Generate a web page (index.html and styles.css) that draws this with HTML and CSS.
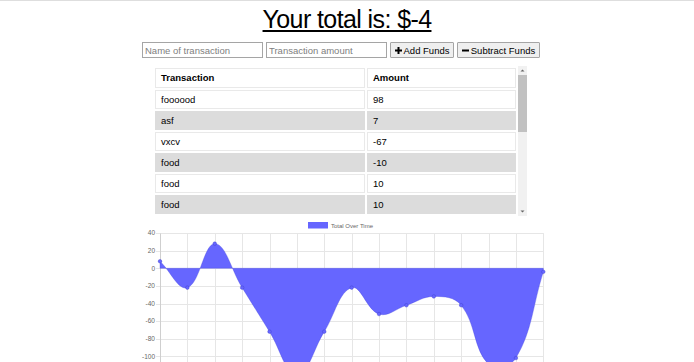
FILE: index.html
```html
<!DOCTYPE html>
<html lang="en">
<head>
<meta charset="utf-8">
<title>Budget Tracker</title>
<link rel="stylesheet" href="styles.css">
</head>
<body>
<div class="topline"></div>
<h1 class="total">Your total is: $-4</h1>
<div class="form-row">
  <input class="field" type="text" placeholder="Name of transaction">
  <input class="field" type="number" placeholder="Transaction amount">
  <button class="btn btn-add"><svg class="ico" viewBox="0 0 7 7" width="7" height="7"><rect x="2.5" y="0" width="2" height="7"/><rect x="0" y="2.5" width="7" height="2"/></svg>Add Funds</button>
  <button class="btn btn-sub"><svg class="ico" viewBox="0 0 7 7" width="7" height="7"><rect x="0" y="2.5" width="7" height="2"/></svg>Subtract Funds</button>
</div>
<div class="table-wrap">
  <div class="table-view">
    <table class="tx">
      <thead><tr><th class="c-name">Transaction</th><th>Amount</th></tr></thead>
      <tbody>
        <tr><td>foooood</td><td>98</td></tr>
        <tr><td>asf</td><td>7</td></tr>
        <tr><td>vxcv</td><td>-67</td></tr>
        <tr><td>food</td><td>-10</td></tr>
        <tr><td>food</td><td>10</td></tr>
        <tr><td>food</td><td>10</td></tr>
      </tbody>
    </table>
  </div>
  <div class="scrollbar" aria-hidden="true">
    <div class="sb-btn"><svg viewBox="0 0 9 9" width="9" height="9"><path d="M2.5 5.5 L4.5 3.5 L6.5 5.5Z"/></svg></div>
    <div class="sb-thumb"></div>
    <div class="sb-rest"></div>
    <div class="sb-btn"><svg viewBox="0 0 9 9" width="9" height="9"><path d="M2.5 3.5 L4.5 5.5 L6.5 3.5Z"/></svg></div>
  </div>
</div>
<svg class="chart" id="chart" width="425" height="145" viewBox="0 0 425 145">
  <g class="legend">
    <rect x="180" y="5" width="20" height="6.5" class="legend-box"/>
    <text x="203" y="10.6" class="legend-text">Total Over Time</text>
  </g>
  <g id="grid" class="grid"></g>
  <g id="labels" class="ylabels"></g>
  <path id="area" class="area" d=""/>
  <g id="points" class="points"></g>
</svg>
<script src="script.js"></script>
</body>
</html>
```

FILE: styles.css
```css
html, body {
  margin: 0;
  padding: 0;
  background: #fff;
}
body {
  font-family: "Liberation Sans", Arial, sans-serif;
  color: #000;
}
.topline {
  height: 1px;
  background: #dedede;
}
.total {
  margin: 4px 0 0;
  font-size: 25px;
  line-height: 29px;
  font-weight: normal;
  text-align: center;
  text-decoration: underline;
  text-underline-offset: 2px;
  text-decoration-thickness: 1.5px;
  letter-spacing: -0.6px;
}
.form-row {
  display: flex;
  gap: 3px;
  margin-top: 8px;
  padding-left: 142px;
  height: 16px;
}
.field {
  box-sizing: border-box;
  width: 121px;
  height: 16px;
  margin: 0;
  padding: 0 2px;
  border: 1px solid #a5a5a5;
  font-family: "Liberation Sans", Arial, sans-serif;
  font-size: 9.5px;
  color: #000;
  background: #fff;
  outline: none;
}
.field::placeholder {
  color: #808080;
}
.field::-webkit-outer-spin-button,
.field::-webkit-inner-spin-button {
  -webkit-appearance: none;
  margin: 0;
}
.btn {
  box-sizing: border-box;
  height: 16px;
  margin: 0;
  padding: 0;
  display: flex;
  align-items: center;
  justify-content: center;
  white-space: nowrap;
  border: 1px solid #a5a5a5;
  border-radius: 1px;
  background: #efefef;
  font-family: "Liberation Sans", Arial, sans-serif;
  font-size: 9.5px;
  color: #000;
}
.btn-add { width: 64px; }
.btn-sub { width: 83px; }
.ico {
  display: block;
  flex: none;
  fill: #000;
  margin-right: 2px;
}
.table-wrap {
  display: flex;
  width: 374px;
  height: 150px;
  margin: 8px 0 0 153px;
}
.table-view {
  flex: 1;
  overflow: hidden;
}
.scrollbar {
  width: 9px;
  flex: none;
  display: flex;
  flex-direction: column;
  background: #f1f1f1;
}
.sb-btn {
  height: 9px;
  flex: none;
}
.sb-btn svg {
  display: block;
  fill: #666;
}
.sb-thumb {
  height: 57px;
  flex: none;
  background: #c1c1c1;
}
.sb-rest {
  flex: 1;
}
.tx {
  width: 100%;
  border-collapse: separate;
  border-spacing: 2px;
  font-size: 9.5px;
  line-height: 13px;
}
.tx th,
.tx td {
  border: 1px solid #e9e9e9;
  padding: 2px 5px;
  text-align: left;
  background: #fff;
}
.tx th {
  font-weight: bold;
  line-height: 14px;
}
.tx .c-name {
  width: 198px;
}
.tx tbody tr:nth-child(even) td {
  background: #dcdcdc;
  border-color: #dcdcdc;
}
.chart {
  display: block;
  margin: 1px 0 0 128px;
  overflow: hidden;
}
.legend-box {
  fill: #6666ff;
}
.legend-text {
  font-family: "Liberation Sans", Arial, sans-serif;
  font-size: 6px;
  fill: #666;
}
.grid line {
  stroke: #e6e6e6;
  stroke-width: 1;
}
.grid line.axis {
  stroke: #cfcfcf;
}
.ylabels text {
  font-family: "Liberation Sans", Arial, sans-serif;
  font-size: 6.5px;
  fill: #666;
  text-anchor: end;
}
.area {
  fill: #6666ff;
  stroke: rgba(70, 70, 220, 0.35);
  stroke-width: 1;
}
.points circle {
  fill: #6666ff;
  stroke: rgba(60, 60, 200, 0.5);
  stroke-width: 0.8;
}
```

FILE: script.js
```js
(function () {
  var NS = "http://www.w3.org/2000/svg";
  var vals = [8, -22, 28, -22, -72, -122, -72, -22, -52, -42, -32, -42, -109, -102, -4];
  var x0 = 32, step = 27.38, zeroY = 51.3, k = 0.88;
  function Y(v) { return zeroY - k * v; }
  var xLast = x0 + step * (vals.length - 1);

  var grid = document.getElementById("grid");
  var labels = document.getElementById("labels");
  function line(x1, y1, x2, y2, cls) {
    var l = document.createElementNS(NS, "line");
    l.setAttribute("x1", x1); l.setAttribute("y1", y1);
    l.setAttribute("x2", x2); l.setAttribute("y2", y2);
    if (cls) l.setAttribute("class", cls);
    grid.appendChild(l);
  }
  for (var v = 40; v >= -140; v -= 20) {
    var yy = Math.round(Y(v)) + 0.5;
    line(28, yy, xLast + 0.5, yy);
    if (v >= -100) {
      var t = document.createElementNS(NS, "text");
      t.setAttribute("x", 27);
      t.setAttribute("y", Y(v) + 2.3);
      t.textContent = String(v);
      labels.appendChild(t);
    }
  }
  var top = Math.round(Y(40)) + 0.5;
  for (var i = 0; i < vals.length; i++) {
    var xx = Math.round(x0 + step * i) + 0.5;
    line(xx, top, xx, 160, i === 0 ? "axis" : "");
  }

  var pts = vals.map(function (v, i) { return { x: x0 + step * i, y: Y(v) }; });
  var tension = 0.4;
  var cps = pts.map(function (cur, i) {
    var prev = pts[i - 1] || cur, next = pts[i + 1] || cur;
    var d01 = Math.hypot(cur.x - prev.x, cur.y - prev.y);
    var d12 = Math.hypot(next.x - cur.x, next.y - cur.y);
    var s01 = d01 / (d01 + d12), s12 = d12 / (d01 + d12);
    if (isNaN(s01)) s01 = 0; if (isNaN(s12)) s12 = 0;
    var fa = tension * s01, fb = tension * s12;
    return {
      px: cur.x - fa * (next.x - prev.x), py: cur.y - fa * (next.y - prev.y),
      nx: cur.x + fb * (next.x - prev.x), ny: cur.y + fb * (next.y - prev.y)
    };
  });
  var d = "M" + pts[0].x + " " + pts[0].y;
  for (var j = 1; j < pts.length; j++) {
    d += " C" + cps[j - 1].nx + " " + cps[j - 1].ny + " " + cps[j].px + " " + cps[j].py + " " + pts[j].x + " " + pts[j].y;
  }
  d += " L" + xLast + " " + zeroY + " L" + x0 + " " + zeroY + " Z";
  document.getElementById("area").setAttribute("d", d);

  var pg = document.getElementById("points");
  pts.forEach(function (p) {
    var c = document.createElementNS(NS, "circle");
    c.setAttribute("cx", p.x); c.setAttribute("cy", p.y); c.setAttribute("r", 1.8);
    pg.appendChild(c);
  });
})();
```
